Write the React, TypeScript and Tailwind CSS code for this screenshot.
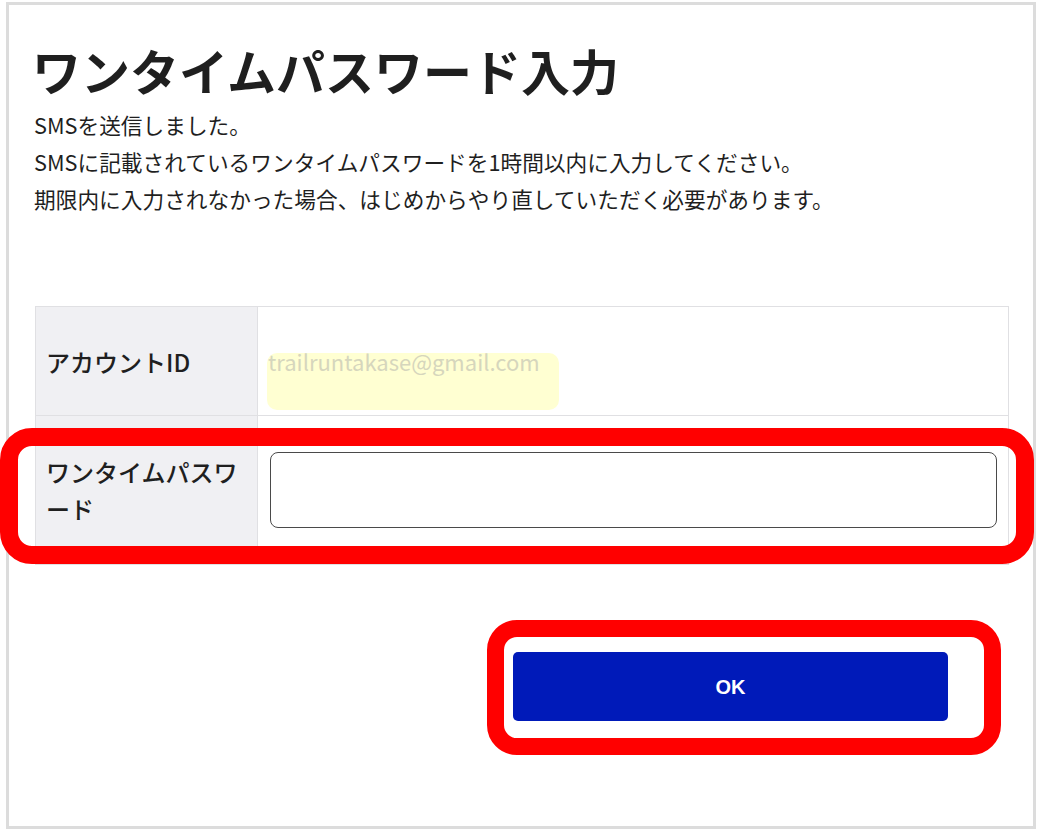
import React from "react";

const jp = { fontFamily: '"Noto Sans CJK JP", "Noto Sans", sans-serif' };

export default function App() {
  return (
    <div className="relative w-[1038px] h-[831px] bg-white overflow-hidden" style={jp}>
      <div className="ml-[6px] mt-[2px] w-[1030px] h-[827px] border-[3px] border-[#dcdcdc] bg-white pt-[40px] pl-[26px] pr-[24px] text-[#1f1f1f]">
        <h1 className="text-[49px] leading-[49px] font-bold -ml-[3px] tracking-[0px]">ワンタイムパスワード入力</h1>
        <div className="mt-[12px] text-[21.7px] leading-[37px] -ml-[1px]">
          <p>SMSを送信しました。</p>
          <p>SMSに記載されているワンタイムパスワードを1時間以内に入力してください。</p>
          <p>期限内に入力されなかった場合、はじめからやり直していただく必要があります。</p>
        </div>

        <div className="mt-[89px] border border-[#e0e0e3]">
          <div className="grid grid-cols-[222px_1fr] h-[109px] border-b border-[#e0e0e3]">
            <div className="bg-[#f0f0f3] border-r border-[#e0e0e3] flex items-center pl-[10px] text-[24px] leading-[37px] font-medium">
              アカウントID
            </div>
            <div className="flex items-end pb-[5px] pl-[9px]">
              <div className="w-[292px] h-[57px] rounded-[10px] bg-[#ffffd2] overflow-visible">
                <div className="-mt-[3px] pl-[1px] text-[22px] leading-[22px] text-[#d6d6bd]">trailruntakase@gmail.com</div>
              </div>
            </div>
          </div>
          <div className="grid grid-cols-[222px_1fr] h-[148px]">
            <div className="bg-[#f0f0f3] border-r border-[#e0e0e3] flex items-center pl-[10px] pr-[10px] text-[24px] leading-[37px] font-medium">
              ワンタイムパスワード
            </div>
            <div className="flex items-center pl-[12px] pr-[11px]">
              <div className="w-full h-[76px] border border-[#4a4a4a] rounded-[8px] bg-white" />
            </div>
          </div>
        </div>

        <div className="mt-[87px] flex justify-end pr-[61px]">
          <button
            className="w-[435px] h-[69px] rounded-[5px] bg-[#001ab9] text-white text-[20px] font-bold"
            style={{ fontFamily: '"Liberation Sans", Arial, sans-serif' }}
          >
            OK
          </button>
        </div>
      </div>

      <div className="absolute left-0 top-[428px] w-[1034px] h-[136px] border-[18px] border-[#ff0000] rounded-[32px] pointer-events-none" />
      <div className="absolute left-[487px] top-[620px] w-[514px] h-[135px] border-[17px] border-[#ff0000] rounded-[30px] pointer-events-none" />
    </div>
  );
}
